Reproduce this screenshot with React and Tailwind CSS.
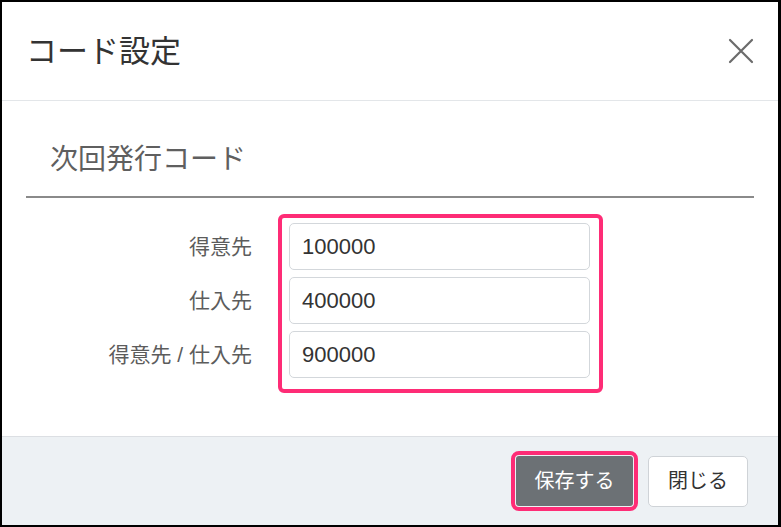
import React from "react";

const fields = [
  { label: "得意先", value: "100000" },
  { label: "仕入先", value: "400000" },
  { label: "得意先 / 仕入先", value: "900000" },
];

const App = () => {
  return (
    <div className="w-[781px] h-[527px] flex flex-col bg-white border-black border-t-2 border-l-2 border-r-[3px] border-b-2 font-['Liberation_Sans','Noto_Sans_CJK_JP',sans-serif]">
      {/* Header */}
      <div className="h-[99px] shrink-0 flex items-center justify-between px-6 border-b border-[#e3e6e9]">
        <h2 className="text-[31px] leading-none text-[#333] font-normal">コード設定</h2>
        <button className="w-[26px] h-[26px] text-[#6b6b6b]" aria-label="close">
          <svg viewBox="0 0 26 26" className="w-[26px] h-[26px]" fill="none" stroke="currentColor" strokeWidth={2.2} strokeLinecap="round">
            <path d="M2 2l22 22M24 2L2 24" />
          </svg>
        </button>
      </div>

      {/* Body */}
      <div className="flex-1 px-6">
        <div className="pt-[41px] pb-[18px] pl-6 border-b-2 border-[#8a8a8a]">
          <h3 className="text-[28px] leading-[36px] text-[#5f5f5f] font-normal">次回発行コード</h3>
        </div>

        <div className="mt-4 flex">
          <div className="w-[226px] pt-[9px] flex flex-col gap-[7px]">
            {fields.map((f) => (
              <div key={f.label} className="h-[47px] flex items-center justify-end text-[21px] text-[#5c5c5c]">
                {f.label}
              </div>
            ))}
          </div>
          <div className="ml-[26px] w-[325px] border-4 border-[#fe2c76] rounded-[6px] pl-[7px] pr-[9px] pt-[5px] pb-[11px] flex flex-col gap-[7px]">
            {fields.map((f) => (
              <input
                key={f.label}
                readOnly
                value={f.value}
                className="h-[47px] w-full rounded-[5px] border border-[#d3d7db] bg-white pl-[12px] text-[22px] text-[#333] outline-none"
              />
            ))}
          </div>
        </div>
      </div>

      {/* Footer */}
      <div className="h-[89px] shrink-0 flex items-center justify-end gap-[15px] pr-[30px] bg-[#edf1f4] border-t border-[#dcdfe3]">
        <button className="w-[117px] h-[50px] rounded-[3px] bg-[#6c7175] text-white text-[20px] outline-4 outline-[#fe2c76] outline-offset-1">
          保存する
        </button>
        <button className="w-[100px] h-[51px] rounded-[5px] bg-white border border-[#cfd3d7] text-[#333] text-[20px]">
          閉じる
        </button>
      </div>
    </div>
  );
};

export default App;
